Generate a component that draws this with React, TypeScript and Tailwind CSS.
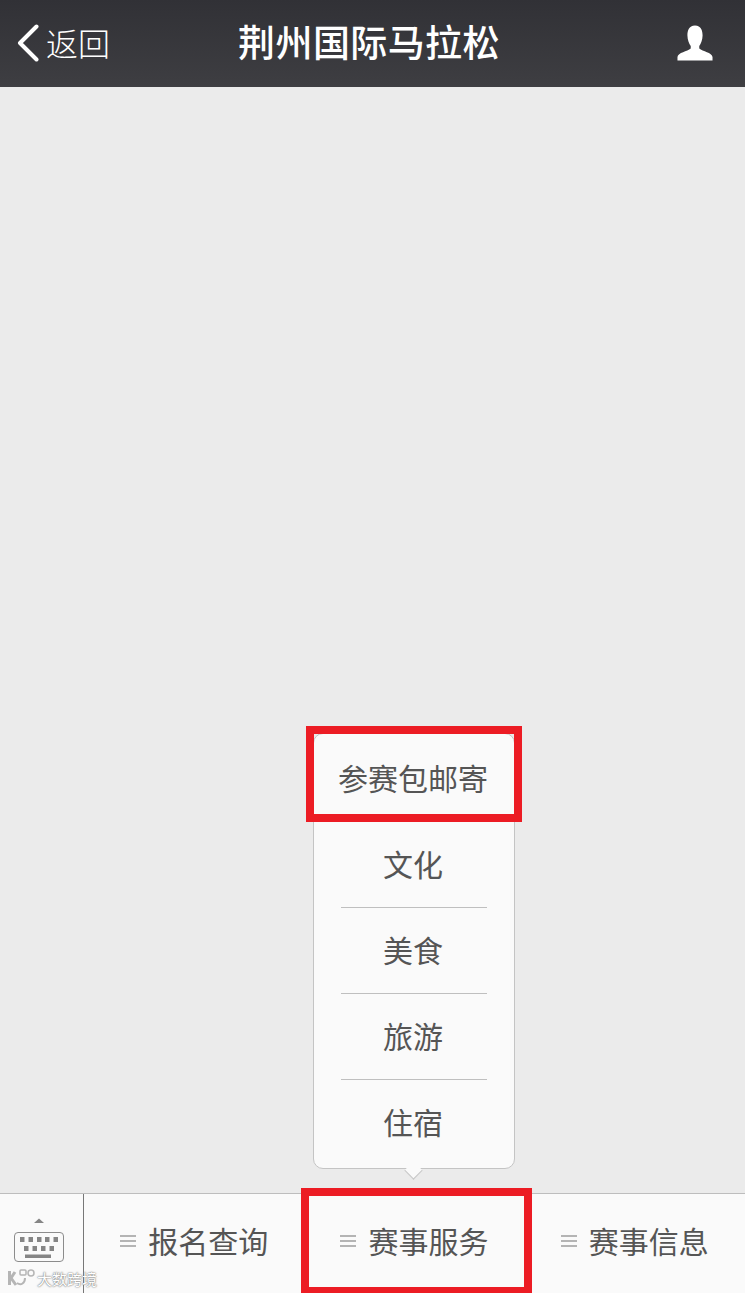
const cjk = "font-['Noto_Sans_CJK_SC','Noto_Sans',sans-serif]";

const menuItems = [
  { label: '参赛包邮寄', row: 'h-[90px] pb-[4px]' },
  { label: '文化', row: 'h-[84px] pb-[5px] border-b border-[#bfbfbf]' },
  { label: '美食', row: 'h-[86px] pb-[4px] border-b border-[#bfbfbf]' },
  { label: '旅游', row: 'h-[86px] pb-[4px] border-b border-[#bfbfbf]' },
  { label: '住宿', row: 'flex-1 pb-[6px]' },
];
const tabs = ['报名查询', '赛事服务', '赛事信息'];

function Hamburger() {
  return (
    <div className="flex flex-col gap-[3px] w-[16px] mr-[12px] mt-[1px]">
      <div className="h-[2px] bg-[#b4b4b4]" />
      <div className="h-[2px] bg-[#b4b4b4]" />
      <div className="h-[2px] bg-[#b4b4b4]" />
    </div>
  );
}

function KeyboardIcon() {
  return (
    <svg width="52" height="48" viewBox="0 0 52 48" fill="none">
      <path d="M21 7 L26 2.5 L31 7 Z" fill="#858585" />
      <rect x="1.5" y="16.5" width="49" height="29" rx="3.5" fill="#fafafa" stroke="#8c8c8c" />
      {[7, 15.5, 24, 32, 40.5].map(x => (
        <rect key={x} x={x} y="21" width="4.5" height="5" fill="#858585" />
      ))}
      {[11, 19.5, 28, 36.5].map(x => (
        <rect key={x} x={x} y="30" width="4.5" height="5" fill="#858585" />
      ))}
      <rect x="12" y="38.5" width="26" height="3.5" fill="#858585" />
    </svg>
  );
}

export default function App() {
  return (
    <div className={`${cjk} relative w-[745px] h-[1293px] flex flex-col overflow-hidden bg-[#ebebeb]`}>
      {/* header */}
      <div className="h-[87px] shrink-0 bg-gradient-to-b from-[#313136] to-[#3e3e42] flex items-center justify-between text-white relative">
        <div className="flex items-center pl-[16px]">
          <svg className="-mt-[1px]" width="24" height="38" viewBox="0 0 24 38" fill="none">
            <path d="M20.5 2.5 L4 19 L20.5 35.5" stroke="white" strokeWidth="4" strokeLinecap="round" strokeLinejoin="round" />
          </svg>
          <span className="text-[32px] leading-none ml-[6px] -mt-[4px] font-light whitespace-nowrap">返回</span>
        </div>
        <div className="absolute left-0 right-0 -top-[1px] bottom-0 flex items-center justify-center pr-[7px] text-[37px] leading-none font-medium tracking-[0.4px] whitespace-nowrap -mt-[3px]">
          荆州国际马拉松
        </div>
        <svg className="mr-[32px] -mt-[1px]" width="36" height="36" viewBox="0 0 38 36" fill="white" preserveAspectRatio="none">
          <path d="M19 0.5 C12.5 0.5 11 6 11 10.5 C11 15 13 19 14.5 21 L14.5 23.5 C11 26.5 1 27.5 0.5 32 L0.5 35.5 L37.5 35.5 L37.5 32 C37 27.5 27 26.5 23.5 23.5 L23.5 21 C25 19 27 15 27 10.5 C27 6 25.5 0.5 19 0.5 Z" />
        </svg>
      </div>

      <div className="flex-1" />

      {/* bottom bar */}
      <div className="h-[100px] shrink-0 bg-[#fafafa] border-t border-[#bdbdbd] flex">
        <div className="w-[84px] shrink-0 border-r border-[#777] flex justify-center pt-[22px]">
          <div className="mr-[5px]">
            <KeyboardIcon />
          </div>
        </div>
        {tabs.map(t => (
          <div key={t} className="flex-1 flex items-center justify-center text-[#555] text-[30px] leading-none pb-[7px] whitespace-nowrap">
            <Hamburger />
            <span>{t}</span>
          </div>
        ))}
      </div>

      {/* popup menu */}
      <div className="absolute left-[313px] top-[733px] w-[202px]">
        <div className="h-[436px] bg-[#fafafa] border border-[#c4c4c4] rounded-[10px] flex flex-col">
          {menuItems.map(m => (
            <div key={m.label} className={`${m.row} mx-[27px] pr-[2px] flex items-center justify-center text-[#555] text-[30px] leading-none whitespace-nowrap`}>
              {m.label}
            </div>
          ))}
        </div>
        <div className="absolute left-[94px] top-[431px] w-[13px] h-[13px] rotate-45 bg-[#fafafa] border-r border-b border-[#c4c4c4]" />
      </div>

      {/* red highlight boxes */}
      <div className="absolute left-[306px] top-[726px] w-[216px] h-[96px] border-[8px] border-[#ec1c24]" />
      <div className="absolute left-[301px] top-[1188px] w-[231px] h-[105px] border-[8px] border-b-[6px] border-[#ec1c24]" />

      {/* watermark */}
      <div className="absolute left-[7px] top-[1268px] flex items-center text-white [text-shadow:0_0_2px_#777,0_0_1px_#777] whitespace-nowrap">
        <svg width="29" height="20" viewBox="0 0 29 20" fill="none">
          <path d="M2.5 3 V17 M8 4 L4 10 L9 17" stroke="#b5b5b5" strokeWidth="3" />
          <path d="M10 15 C14 18 18 15 18 10" stroke="#b5b5b5" strokeWidth="2" />
          <rect x="13" y="2" width="6" height="5" rx="1" stroke="#b5b5b5" strokeWidth="1.5" />
          <circle cx="24" cy="5" r="3" stroke="#b5b5b5" strokeWidth="1.5" />
        </svg>
        <span className="text-[15px] leading-none ml-[1px]">大数跨境</span>
      </div>
    </div>
  );
}
